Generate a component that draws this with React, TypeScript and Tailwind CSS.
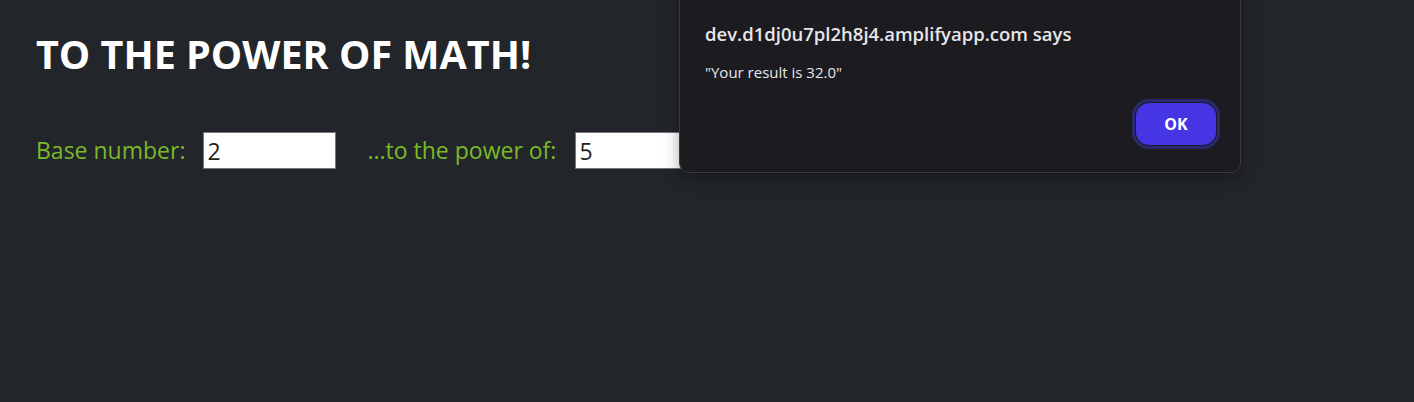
export default function App() {
  return (
    <div className="relative min-h-[402px] w-full overflow-hidden bg-[#222529] font-['Open_Sans',sans-serif]">
      <div className="px-9 pt-[28px]">
        <h1 className="text-[39.5px] font-bold leading-[52px] text-white">TO THE POWER OF MATH!</h1>
        <div className="mt-[52px] flex items-center text-[23px] text-[#79b92b]">
          <label className="mr-[18px]">Base number:</label>
          <input
            defaultValue="2"
            className="h-[37px] w-[133px] border border-[#767676] bg-white px-[3px] text-[23px] text-[#222] outline-none"
          />
          <label className="ml-[31px] mr-[19px]">...to the power of:</label>
          <input
            defaultValue="5"
            className="h-[37px] w-[133px] border border-[#767676] bg-white px-[3px] text-[23px] text-[#222] outline-none"
          />
        </div>
      </div>

      {/* alert dialog */}
      <div className="absolute left-[679px] top-[-10px] w-[562px] rounded-[10px] border border-[#3a3a40] bg-[#1c1b20] pb-[23px] pl-[25px] pr-[20px] pt-[30px] shadow-[0_4px_16px_rgba(0,0,0,0.35)]">
        <div className="text-[18.5px] font-semibold leading-[26px] text-[#e6e6ea]">dev.d1dj0u7pl2h8j4.amplifyapp.com says</div>
        <div className="mt-[15px] text-[15px] leading-[20px] text-[#e6e6ea]">"Your result is 32.0"</div>
        <div className="mt-[17px] flex justify-end">
          <div className="rounded-[17px] border-[3px] border-[#2c2a6e] p-[1px]">
            <button className="h-[42px] w-[80px] rounded-[13px] bg-[#4535e3] text-[16px] font-bold text-white">
              OK
            </button>
          </div>
        </div>
      </div>
    </div>
  );
}
